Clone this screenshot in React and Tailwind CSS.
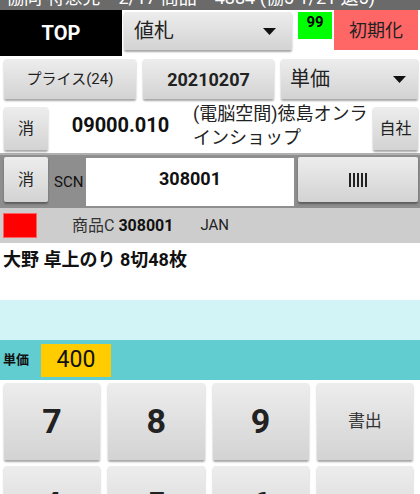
import React from "react";

const FONT = { fontFamily: "Roboto, 'Noto Sans CJK JP', sans-serif" };

const btn =
  "rounded-[2px] bg-gradient-to-b from-[#ededed] to-[#d3d3d3] shadow-[0_2px_2px_rgba(0,0,0,0.35)] text-[#222] flex items-center justify-center";

const Caret = ({ className = "" }) => (
  <svg width="13" height="7" viewBox="0 0 13 7" className={className}>
    <polygon points="0,0 13,0 6.5,7" fill="#111" />
  </svg>
);

const Key = ({ children, big = true }) => (
  <div
    className={`${btn} h-[77px] ${
      big ? "text-[34px] font-bold text-[#111]" : "text-[17px] text-[#333]"
    }`}
  >
    {children}
  </div>
);

export default function App() {
  return (
    <div className="w-[420px] h-[494px] overflow-hidden bg-white" style={FONT}>
      {/* title bar, cut off at the top */}
      <div className="h-[10px] overflow-hidden bg-[#6a6a6a]">
        <div className="-mt-[13px] pl-[6px] text-[18px] leading-[22px] text-white whitespace-nowrap">
          協同 特急売・2/17 商品・4884 (協5 1/21 退5)
        </div>
      </div>

      {/* row 1 */}
      <div className="flex h-[46px]">
        <div className="w-[122px] h-full bg-black text-white text-[20px] font-bold flex items-center justify-center">
          TOP
        </div>
        <div
          className={`${btn} ml-[2px] mt-[2px] w-[168px] h-[38px] !justify-between pl-[10px] pr-[16px] text-[20px]`}
        >
          <span>値札</span>
          <Caret />
        </div>
        <div className="ml-[6px] mt-[2px] w-[34px] h-[27px] bg-[#00ff00] text-[15px] font-bold text-black flex justify-center pt-[1px] leading-[18px]">
          99
        </div>
        <div className="ml-[2px] w-[84px] h-[40px] bg-[#ff6666] text-[18px] text-[#222] flex items-center justify-center">
          初期化
        </div>
      </div>

      {/* row 2 */}
      <div className="flex h-[44px] pt-[3px] pl-[4px] gap-[7px]">
        <div className={`${btn} w-[132px] h-[40px] text-[15px]`}>プライス(24)</div>
        <div className={`${btn} w-[131px] h-[40px] text-[18px] font-bold text-[#111]`}>
          20210207
        </div>
        <div
          className={`${btn} w-[137px] h-[40px] !justify-between pl-[9px] pr-[12px] text-[20px]`}
        >
          <span>単価</span>
          <Caret />
        </div>
      </div>

      {/* row 3 */}
      <div className="flex items-start h-[53px] pt-[7px] pl-[4px]">
        <div className={`${btn} w-[44px] h-[43px] text-[16px]`}>消</div>
        <div className="w-[145px] h-[43px] flex items-center justify-center text-[20px] font-bold text-[#111] -mt-[4px]">
          09000.010
        </div>
        <div className="w-[180px] -mt-[5px] text-[18px] leading-[24px] text-[#222]">
          (電脳空間)徳島オンラ
          <br />
          インショップ
        </div>
        <div className={`${btn} w-[45px] h-[43px] text-[16px]`}>自社</div>
      </div>

      {/* row 4: scan */}
      <div className="h-[2px] bg-[#b0b0b0]" />
      <div className="flex h-[53px] bg-[#8e8e8e]">
        <div className="w-[50px] pl-[4px] pt-[2px]">
          <div className={`${btn} w-[44px] h-[45px] text-[16px]`}>消</div>
        </div>
        <div className="w-[36px] flex items-center pl-[4px] pt-[2px] text-[15px] text-[#111]">
          SCN
        </div>
        <div className="mt-[3px] w-[208px] h-[48px] bg-white flex justify-center pt-[10px] text-[18px] font-bold text-[#111] leading-[22px]">
          308001
        </div>
        <div className="pl-[4px] pt-[2px]">
          <div className={`${btn} w-[120px] h-[45px] gap-[2px]`}>
            {[0, 1, 2, 3, 4].map((i) => (
              <span key={i} className="w-[2px] h-[14px] bg-[#222]" />
            ))}
          </div>
        </div>
      </div>

      {/* row 5 */}
      <div className="flex items-center h-[35px] bg-[#cdcdcd] pl-[3px]">
        <div className="w-[34px] h-[25px] bg-[#ff0000] border border-[#ff6060]" />
        <div className="ml-[35px] text-[16px] text-[#333]">
          商品C <span className="font-bold text-[#111]">308001</span>
        </div>
        <div className="ml-[27px] text-[15px] text-[#222]">JAN</div>
      </div>

      {/* row 6 */}
      <div className="h-[57px] pl-[3px] pt-[5px] text-[18px] font-bold text-[#111] leading-[24px]">
        大野 卓上のり 8切48枚
      </div>

      {/* row 7 */}
      <div className="h-[40px] bg-[#d3f4f6]" />

      {/* row 8 */}
      <div className="flex items-center h-[40px] bg-[#62cdd1] pl-[3px]">
        <div className="w-[38px] text-[13px] font-bold text-[#111]">単価</div>
        <div className="w-[70px] h-[33px] bg-[#ffcc00] flex items-center justify-center text-[23px] text-[#111]">
          400
        </div>
      </div>

      {/* keypad */}
      <div className="grid grid-cols-4 gap-x-[8px] gap-y-[6px] pl-[4px] pr-[7px] pt-[3px]">
        <Key>7</Key>
        <Key>8</Key>
        <Key>9</Key>
        <Key big={false}>書出</Key>
        <Key>4</Key>
        <Key>5</Key>
        <Key>6</Key>
        <Key big={false}>訂正</Key>
      </div>
    </div>
  );
}
